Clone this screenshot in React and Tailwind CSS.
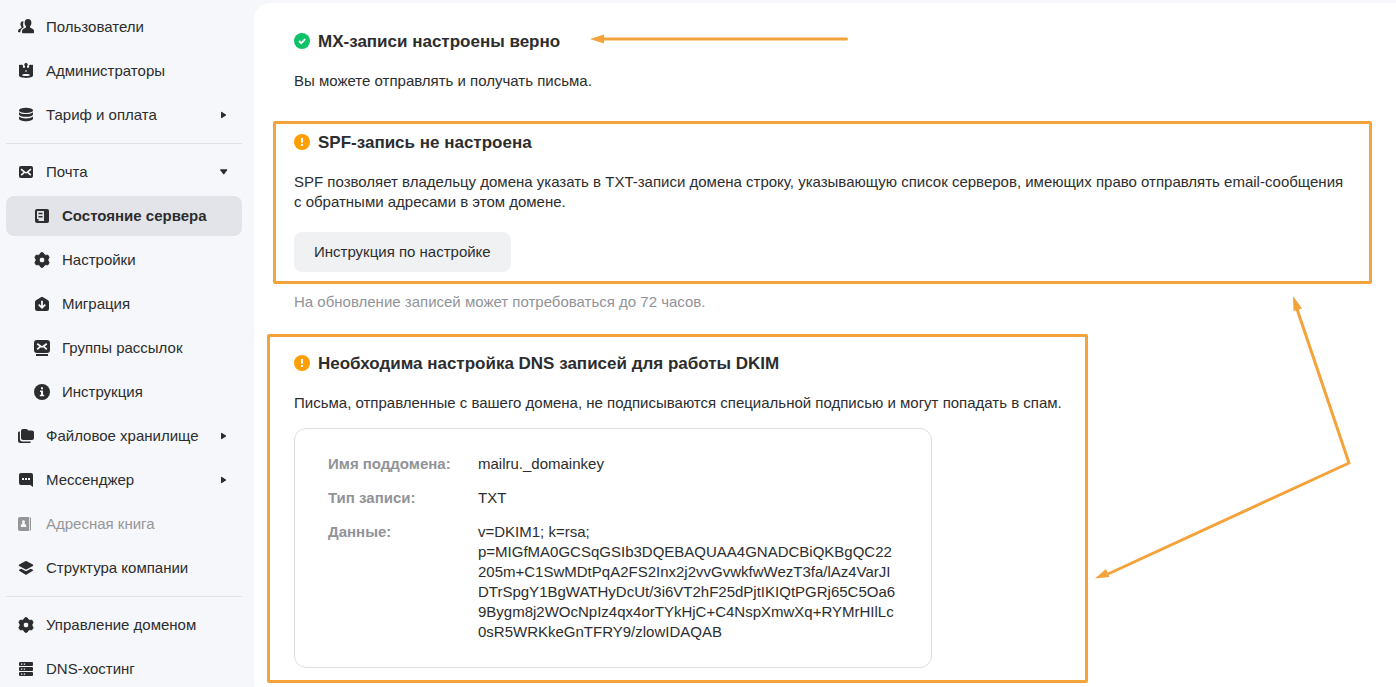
const icons = {
  users: (
    <>
      <path d="M10 0c2.300 0 3.400 1.500 3.400 3.600 0 1.600-.5 2.900-1.300 3.700-.3.500-.2 1.100.3 1.400l2.500 1.400c.8.500 1.100 1.300 1.100 2.300v1.100c0 .5-.3.800-.8.800H4.800c-.5 0-.8-.3-.8-.8v-1.100c0-1 .4-1.800 1.100-2.300l2.500-1.400c.5-.3.600-.9.300-1.400-.8-.8-1.300-2.100-1.300-3.700C6.600 1.500 7.800 0 10 0z" />
      <path d="M5.500 2.200c-1.800-.3-3.100 1-3.100 2.900 0 1.200.4 2.100 1 2.800.2.400.1.900-.3 1.200L1 10.300c-.7.500-1 1.100-1 1.900 0 .7.200 1 .7 1h1.700c0-2 .8-3.300 2.300-4.200l1.100-.7C5 7 4.900 5.200 5.500 2.200z" />
    </>
  ),
  crown: (
    <path
      fillRule="evenodd"
      d="M8 0a1.700 1.700 0 0 1 1 3.100v1.500c.9.500 1.900.2 2.300-.7l-.5-1.300 1.900-1.200.9.700L15 1.800v10.800c0 1.600-3.200 2.400-7 2.400s-7-.8-7-2.400V1.800l1.400.3.900-.7 1.900 1.200-.5 1.300c.4.900 1.400 1.200 2.300.7V3.100A1.700 1.700 0 0 1 8 0zm0 7l-1 1 1 1 1-1zM8 11c-2.300 0-4 .5-4 1.100s1.700 1 4 1 4-.4 4-1S10.300 11 8 11z"
    />
  ),
  coins: (
    <>
      <ellipse cx="8" cy="3.400" rx="7" ry="2.700" />
      <path d="M1 5.200c1.200 1.300 4 1.900 7 1.900s5.800-.6 7-1.900v2c0 1.600-3.200 2.600-7 2.600S1 8.800 1 7.200z" />
      <path d="M1 9.500c1.200 1.300 4 1.900 7 1.900s5.800-.6 7-1.900v2c0 1.700-3.200 2.700-7 2.700s-7-1-7-2.700z" />
    </>
  ),
  mail: (
    <>
      <rect x="1" y="2" width="14" height="12" rx="2" />
      <path
        d="M3 5.200l3.600 3c.9.700 1.900.7 2.800 0l3.600-3M3.200 11.200l2.800-2.600M12.800 11.200L10 8.600"
        fill="none"
        stroke="#f6f7fa"
        strokeWidth="1.600"
      />
    </>
  ),
  server: (
    <>
      <rect x="1" y="1" width="14" height="14" rx="2" />
      <path d="M3 3h7v10H3z" fill="#e3e4ea" />
      <path d="M4.500 4.800h4v1.400h-4zM4.500 8h4v1.400h-4zM3 11h1.500v2H3z" />
    </>
  ),
  gear: (
    <path
      fillRule="evenodd"
      d="M6.900.8h2.200l1.300 1.900 1.100.6 2.400-.1 1.200 2-1.100 2v1.600l1.100 2-1.200 2-2.400-.1-1.100.6-1.300 1.900H6.900l-1.300-1.900-1.100-.6-2.400.1-1.200-2 1.100-2V7.200l-1.100-2 1.200-2 2.400.1 1.100-.6zM8 5.100a2.900 2.900 0 1 0 0 5.800 2.900 2.900 0 0 0 0-5.800z"
      stroke="currentColor"
      strokeLinejoin="round"
    />
  ),
  migration: (
    <>
      <path d="M6.900 1.200a2 2 0 0 1 2.200 0l4.900 3.100c.6.400 1 1 1 1.700v6.500a2.500 2.500 0 0 1-2.500 2.500h-9A2.500 2.500 0 0 1 1 12.500V6c0-.7.400-1.300 1-1.700z" />
      <path d="M8 4.800v6.700M4.700 8.700L8 11.700l3.300-3" fill="none" stroke="#f6f7fa" strokeWidth="1.800" />
    </>
  ),
  groups: (
    <>
      <rect x="0" y="0" width="16" height="13" rx="3" />
      <rect x="2" y="14" width="12" height="2" />
      <path
        d="M3.200 3.700l3.400 2.600c.9.600 1.900.6 2.800 0l3.400-2.600M3.200 9.300l3-2.600M12.800 9.300l-3-2.600"
        fill="none"
        stroke="#f6f7fa"
        strokeWidth="1.700"
      />
    </>
  ),
  info: (
    <>
      <circle cx="8" cy="8" r="8" />
      <path d="M7 3.200h2v2H7zM6 6.500h3v4.300h1.200v1.400H5.800v-1.400H7V7.900H6z" fill="#f6f7fa" />
    </>
  ),
  files: (
    <>
      <path d="M5 1h3.200c.5 0 1 .2 1.300.6l.7.800H14a2 2 0 0 1 2 2V10a2 2 0 0 1-2 2H5a2 2 0 0 1-2-2V3a2 2 0 0 1 2-2z" />
      <path d="M1.900 3.500H1A1.500 1.500 0 0 0 0 5v7.500A2.500 2.500 0 0 0 2.500 15h9c.8 0 1.300-.5 1.300-1.600H4a2.100 2.100 0 0 1-2.100-2.100z" />
    </>
  ),
  chat: (
    <>
      <path d="M3 1h10a2 2 0 0 1 2 2v12l-2.700-2H3a2 2 0 0 1-2-2V3a2 2 0 0 1 2-2z" />
      <path d="M4 6h2v2H4zM7 6h2v2H7zM10 6h2v2h-2z" fill="#f6f7fa" />
    </>
  ),
  book: (
    <>
      <path d="M2 1h9v14H2a2 2 0 0 1-2-2V3a2 2 0 0 1 2-2z" />
      <path d="M11.800 1c.8.100 1.200.8 1.200 1.700v10.600c0 .9-.4 1.600-1.200 1.700z" />
      <path d="M5.500 4.200a1.500 1.500 0 0 1 1.200 2.400V8l1.500.8V11H2.800V8.800L4.300 8V6.600a1.500 1.500 0 0 1 1.200-2.400z" fill="#f6f7fa" />
    </>
  ),
  layers: (
    <>
      <path d="M7.200 1.200a1.800 1.800 0 0 1 1.600 0l6 3.400c.6.400.6 1 0 1.400l-6 3.200a1.800 1.800 0 0 1-1.600 0l-6-3.200C.6 5.600.6 5 1.200 4.600z" />
      <path d="M1 9.700l2.300-.9L8 11.300l4.700-2.500 2.300.9c.3.400.2.800-.2 1.100L8.800 14.500a1.800 1.800 0 0 1-1.600 0l-6-3.700c-.4-.3-.5-.7-.2-1.100z" />
    </>
  ),
  dns: (
    <>
      <rect x="1" y="1" width="14" height="4" rx="1" />
      <rect x="1" y="6" width="14" height="4" rx="1" />
      <rect x="1" y="11" width="14" height="4" rx="1" />
      <path
        d="M3 2.400h1.300v1.300H3zM5.800 2.400h1.300v1.300H5.800zM3 7.400h1.300v1.300H3zM5.800 7.400h1.300v1.300H5.800zM3 12.400h1.300v1.300H3zM5.800 12.400h1.300v1.300H5.800z"
        fill="#f6f7fa"
      />
    </>
  ),
};

const menu = [
  [
    { label: "Пользователи", icon: "users" },
    { label: "Администраторы", icon: "crown" },
    { label: "Тариф и оплата", icon: "coins", caret: "right" },
  ],
  [
    { label: "Почта", icon: "mail", caret: "down" },
    { label: "Состояние сервера", icon: "server", sub: true, active: true },
    { label: "Настройки", icon: "gear", sub: true },
    { label: "Миграция", icon: "migration", sub: true },
    { label: "Группы рассылок", icon: "groups", sub: true },
    { label: "Инструкция", icon: "info", sub: true },
    { label: "Файловое хранилище", icon: "files", caret: "right" },
    { label: "Мессенджер", icon: "chat", caret: "right" },
    { label: "Адресная книга", icon: "book", disabled: true },
    { label: "Структура компании", icon: "layers" },
  ],
  [
    { label: "Управление доменом", icon: "gear" },
    { label: "DNS-хостинг", icon: "dns" },
  ],
];

const dkim = [
  { name: "Имя поддомена:", value: "mailru._domainkey" },
  { name: "Тип записи:", value: "TXT" },
  {
    name: "Данные:",
    value:
      "v=DKIM1; k=rsa; p=MIGfMA0GCSqGSIb3DQEBAQUAA4GNADCBiQKBgQC22205m+C1SwMDtPqA2FS2Inx2j2vvGvwkfwWezT3fa/lAz4VarJIDTrSpgY1BgWATHyDcUt/3i6VT2hF25dPjtIKIQtPGRj65C5Oa69Bygm8j2WOcNpIz4qx4orTYkHjC+C4NspXmwXq+RYMrHIlLc0sR5WRKkeGnTFRY9/zlowIDAQAB",
  },
];

function MenuItem({ item }) {
  const tone = item.disabled ? "text-[#959698]" : "text-[#2c2d2e]";

  return (
    <li>
      <a
        href="#"
        aria-disabled={item.disabled}
        className={`flex h-10 items-center gap-3 rounded-lg pr-2.5 ${tone} ${
          item.sub ? "pl-7" : "pl-3"
        } ${item.active ? "bg-[#e3e4ea] font-bold" : ""}`}
      >
        <svg viewBox="0 0 16 16" className="size-4 shrink-0" fill="currentColor">
          {icons[item.icon]}
        </svg>
        <span className="flex-1 whitespace-nowrap">{item.label}</span>
        {item.caret && (
          <svg viewBox="0 0 16 16" className="size-4" fill="currentColor">
            {item.caret === "right" ? (
              <path d="M5 5.500c0-.6.500-.8 1-.5l3.800 2.500c.4.300.4.700 0 1L6 11c-.5.300-1 .1-1-.5z" />
            ) : (
              <path d="M4.800 5.200h5.800c.6 0 .8.500.5 1L8.300 10c-.3.400-.9.400-1.200 0L4.300 6.200c-.3-.5-.1-1 .5-1z" />
            )}
          </svg>
        )}
      </a>
    </li>
  );
}

function StatusIcon({ ok }) {
  return (
    <svg viewBox="0 0 16 16" className="size-4 shrink-0">
      <circle cx="8" cy="8" r="8" fill={ok ? "#0dc268" : "#ff9e00"} />
      {ok ? (
        <path d="M5 8l2.200 2.200L11.200 6.200" fill="none" stroke="#fff" strokeWidth="1.800" />
      ) : (
        <path d="M7 4h2v4.800H7zM7 10h2v2H7z" fill="#fff" />
      )}
    </svg>
  );
}

function StatusTitle({ ok, children }) {
  return (
    <h2 className="flex h-6 items-center gap-2 text-[17px] leading-6 font-bold">
      <StatusIcon ok={ok} />
      <span className="pt-0.5">{children}</span>
    </h2>
  );
}

export default function App() {
  return (
    <div className="flex h-screen overflow-hidden bg-[#f6f7fa] font-['Liberation_Sans',Arial,sans-serif] text-[15px] leading-5 text-[#2c2d2e]">
      <nav className="w-[254px] shrink-0 pt-[7px] pr-3 pl-1.5">
        {menu.map((group, i) => (
          <ul
            key={i}
            className={`flex flex-col gap-1 ${i > 0 ? "mt-2 border-t border-[#e1e2e6] pt-2" : ""}`}
          >
            {group.map((item) => (
              <MenuItem key={item.label} item={item} />
            ))}
          </ul>
        ))}
      </nav>

      <main className="relative mt-[3px] min-w-0 flex-1 rounded-tl-2xl bg-white pt-[26px]">
        <section className="pl-10">
          <div className="flex items-center gap-[30px]">
            <StatusTitle ok>MX-записи настроены верно</StatusTitle>
            <svg viewBox="0 0 258 12" className="mb-1 h-3 w-[258px]">
              <path d="M12 6h244.500" stroke="#f4a23a" strokeWidth="3" strokeLinecap="round" />
              <path d="M0 6L14 1.500v9z" fill="#f4a23a" />
            </svg>
          </div>
          <p className="mt-[18px]">Вы можете отправлять и получать письма.</p>
        </section>

        <section className="mt-[30px] mr-6 ml-[19px] rounded-xs border-3 border-[#f4a23a] px-[18px] pt-1.5 pb-[9px]">
          <StatusTitle>SPF-запись не настроена</StatusTitle>
          <p className="mt-[18px]">
            SPF позволяет владельцу домена указать в TXT-записи домена строку, указывающую
            список серверов, имеющих право отправлять email-сообщения с обратными адресами в
            этом домене.
          </p>
          <button type="button" className="mt-5 h-10 rounded-lg bg-[#f0f1f3] px-5">
            Инструкция по настройке
          </button>
        </section>

        <p className="mt-2 pl-10 text-[#919399]">
          На обновление записей может потребоваться до 72 часов.
        </p>

        <section className="mt-[22px] ml-[13px] w-[821px] max-w-full rounded-xs border-3 border-[#f4a23a] pt-3.5 pr-4 pb-3 pl-6">
          <StatusTitle>Необходима настройка DNS записей для работы DKIM</StatusTitle>
          <p className="mt-[18px]">
            Письма, отправленные с вашего домена, не подписываются специальной подписью и
            могут попадать в спам.
          </p>
          <dl className="mt-[15px] flex w-[638px] max-w-full flex-col gap-3.5 rounded-xl border border-[#dddee1] px-[33px] py-[25px]">
            {dkim.map((row) => (
              <div key={row.name} className="flex">
                <dt className="w-[150px] shrink-0 font-bold text-[#919399]">{row.name}</dt>
                <dd className="min-w-0 flex-1 wrap-break-word">{row.value}</dd>
              </div>
            ))}
          </dl>
        </section>

        {/* callout pointing at both records */}
        <svg viewBox="0 0 256 284" className="absolute top-[293px] left-[841px] h-[284px] w-[256px]">
          <path
            d="M202 13L254 167L13 278"
            fill="none"
            stroke="#f4a23a"
            strokeWidth="3"
            strokeLinejoin="round"
          />
          <path d="M198 0L207 12.500L198.500 15z M0 282.500L11 273L14.500 281z" fill="#f4a23a" />
        </svg>
      </main>
    </div>
  );
}
